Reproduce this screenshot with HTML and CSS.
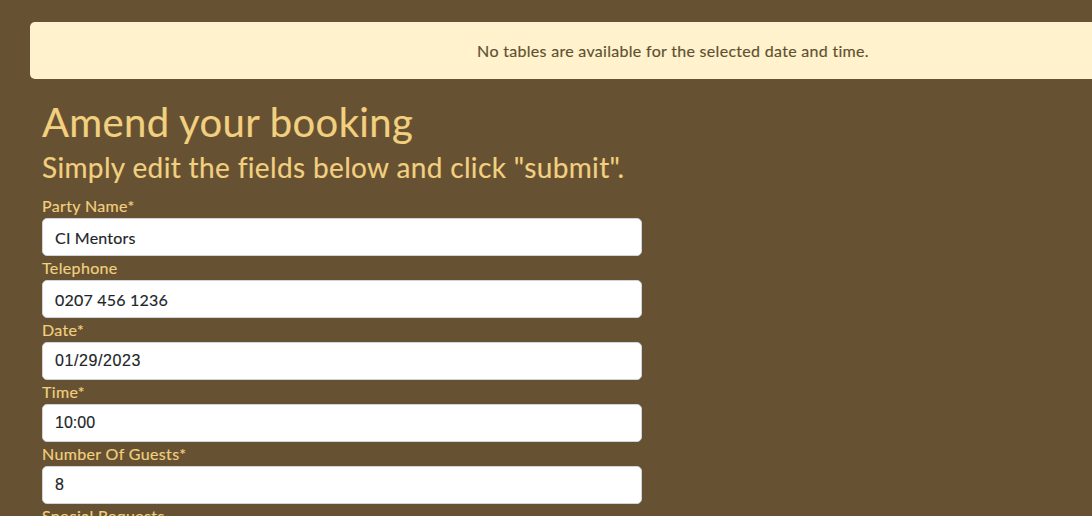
FILE: index.html
```html
<!DOCTYPE html>
<html lang="en">
<head>
<meta charset="utf-8">
<title>Amend your booking</title>
<link rel="stylesheet" href="styles.css">
</head>
<body>
<div class="page">
  <div class="alert">No tables are available for the selected date and time.</div>
  <main class="content">
    <h1 class="title">Amend your booking</h1>
    <h2 class="subtitle">Simply edit the fields below and click "submit".</h2>
    <form class="form">
      <div class="field">
        <label class="label" for="party">Party Name*</label>
        <input class="input" id="party" type="text" value="CI Mentors">
      </div>
      <div class="field">
        <label class="label" for="tel">Telephone</label>
        <input class="input" id="tel" type="text" value="0207 456 1236">
      </div>
      <div class="field">
        <label class="label" for="date">Date*</label>
        <input class="input input-alt input-date" id="date" type="text" value="01/29/2023">
      </div>
      <div class="field">
        <label class="label" for="time">Time*</label>
        <input class="input input-alt" id="time" type="text" value="10:00">
      </div>
      <div class="field">
        <label class="label" for="guests">Number Of Guests*</label>
        <input class="input input-alt" id="guests" type="text" value="8">
      </div>
      <div class="field">
        <label class="label" for="req">Special Requests</label>
        <textarea class="input textarea" id="req"></textarea>
      </div>
    </form>
  </main>
</div>
</body>
</html>
```
FILE: styles.css
```css
html, body {
  margin: 0;
  padding: 0;
  overflow: hidden;
  background: #665233;
}
body {
  font-family: Lato, "Noto Sans", sans-serif;
  color: #f2d07f;
  letter-spacing: 0.35px;
  -webkit-text-stroke: 0.15px;
}
.page {
  padding: 22px 0 0 30px;
}
.alert {
  width: 1286px;
  height: 57px;
  box-sizing: border-box;
  background: #fff2cc;
  color: #5e5030;
  border-radius: 5px;
  display: flex;
  align-items: center;
  justify-content: center;
  font-size: 16px;
  letter-spacing: 0.3px;
}
.content {
  padding: 0 12px;
}
.title {
  margin: 19px 0 0;
  font-size: 40px;
  font-weight: 400;
  line-height: 48px;
  color: #f2d07f;
}
.subtitle {
  margin: 3px 0 9px;
  font-size: 28px;
  font-weight: 400;
  line-height: 36px;
  color: #f2d07f;
}
.form {
  display: flex;
  flex-direction: column;
}
.field {
  display: flex;
  flex-direction: column;
}
.label {
  font-size: 16px;
  line-height: 24px;
  color: #f2d07f;
}
.input {
  width: 600px;
  height: 38px;
  box-sizing: border-box;
  border: 1px solid #ced4da;
  border-radius: 5px;
  background: #fff;
  padding: 6px 12px;
  font-family: Lato, "Noto Sans", sans-serif;
  font-size: 16px;
  letter-spacing: 0.2px;
  color: #212529;
  outline: none;
}
.input-alt {
  font-family: "Liberation Sans", Arial, sans-serif;
  font-size: 16px;
  letter-spacing: 0;
}
.input-date {
  letter-spacing: 0.6px;
}
.textarea {
  height: 80px;
  resize: none;
}
```
